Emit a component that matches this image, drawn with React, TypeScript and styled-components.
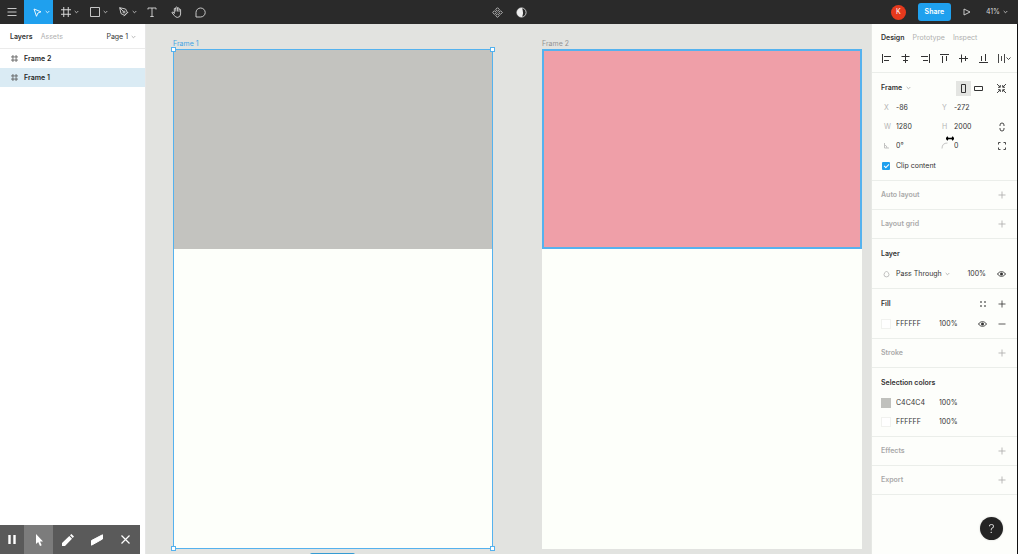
import React from "react";
import styled, { createGlobalStyle } from "styled-components";

const Global = createGlobalStyle`
  *, *::before, *::after { box-sizing: border-box; }
  body { margin: 0; overflow: hidden; }
  body, button, input { font-family: Inter, "Liberation Sans", sans-serif; font-size: 7px; line-height: 10px; }
  button { border: 0; padding: 0; background: none; color: inherit; cursor: pointer; }
  svg { display: block; flex: none; }
`;

const blue = "#1fa0ee";
const outline = "#55b2ee";

const Page = styled.div`
  height: 100vh;
  display: flex;
  flex-direction: column;
  color: #333;
`;

const TopBar = styled.header`
  display: grid;
  grid-template-columns: 1fr auto 1fr;
  height: 24px;
  flex: none;
  background: #2a2a2a;
  color: #d8d8d8;
`;

const Tools = styled.div<{ $end?: boolean }>`
  display: flex;
  align-items: stretch;
  justify-content: ${(p) => (p.$end ? "flex-end" : "flex-start")};
`;

const Tool = styled.button<{ $width: number; $active?: boolean }>`
  display: flex;
  align-items: center;
  justify-content: center;
  width: ${(p) => p.$width}px;
  color: ${(p) => (p.$active ? "#fff" : "inherit")};
  background: ${(p) => (p.$active ? blue : "transparent")};
`;

const MenuTool = styled(Tool)`
  justify-content: flex-end;
  gap: 3px;
  padding-right: 3px;
`;

const Account = styled(Tools)`
  align-items: center;
  padding-right: 10px;
`;

const Avatar = styled.span`
  display: grid;
  place-items: center;
  width: 15px;
  height: 15px;
  margin-right: 12px;
  border-radius: 50%;
  background: #e5391d;
  color: #fff;
`;

const ShareButton = styled.button`
  width: 33px;
  height: 18px;
  margin-right: 12px;
  border-radius: 3px;
  background: ${blue};
  color: #fff;
  font-weight: 600;
`;

const Play = styled.button`
  margin-right: 15px;
`;

const Zoom = styled.button`
  display: flex;
  align-items: center;
  gap: 3px;
`;

const Body = styled.div`
  display: flex;
  flex: 1;
  min-height: 0;
`;

const LeftPanel = styled.aside`
  display: flex;
  flex-direction: column;
  width: 146px;
  flex: none;
  background: #fff;
  border-right: 1px solid #e6e6e6;
`;

const LeftTabs = styled.div`
  display: flex;
  align-items: center;
  height: 25px;
  padding: 2px 9px 0 10px;
  gap: 8px;
  border-bottom: 1px solid #ebebeb;
`;

const Tab = styled.button<{ $active?: boolean }>`
  color: ${(p) => (p.$active ? "#333" : "#b0b0b0")};
  font-weight: ${(p) => (p.$active ? 600 : 400)};
`;

const PageButton = styled.button`
  display: flex;
  align-items: center;
  gap: 3px;
  margin-left: auto;
`;

const LayerRow = styled.button<{ $selected?: boolean }>`
  display: flex;
  align-items: center;
  gap: 6px;
  height: 19px;
  padding: 0 11px;
  font-weight: 600;
  color: #262626;
  background: ${(p) => (p.$selected ? "#daebf4" : "#fff")};
  > svg { color: #555; }
`;

const Recorder = styled.div`
  display: flex;
  height: 29px;
  width: 140px;
  margin-top: auto;
  background: #5a5a5a;
  color: #fff;
`;

const RecorderButton = styled.button<{ $active?: boolean }>`
  display: grid;
  place-items: center;
  flex: 1;
  background: ${(p) => (p.$active ? "#7c7c7c" : "transparent")};
  &:first-child { flex: none; width: 24px; }
`;

const Canvas = styled.main`
  position: relative;
  flex: 1;
  overflow: hidden;
  background: #e2e3e0;
`;

const Artboard = styled.section<{ $x: number; $selected?: boolean }>`
  position: absolute;
  left: ${(p) => p.$x}px;
  top: 25px;
  width: 320px;
  height: 500px;
  background: #fdfffa;
  box-shadow: ${(p) => (p.$selected ? `inset 0 0 0 1px ${outline}` : "none")};
`;

const ArtboardName = styled.span<{ $selected?: boolean }>`
  position: absolute;
  left: 0;
  top: -10px;
  color: ${(p) => (p.$selected ? "#3ea3e3" : "#929292")};
`;

const Shape = styled.div<{ $color: string; $edge: number }>`
  height: 200px;
  background: ${(p) => p.$color};
  border: ${(p) => p.$edge}px solid ${outline};
  border-bottom-width: ${(p) => (p.$edge === 1 ? 0 : p.$edge)}px;
`;

const Handle = styled.i<{ $right?: boolean; $bottom?: boolean }>`
  position: absolute;
  width: 5px;
  height: 5px;
  background: #fff;
  border: 1px solid ${outline};
  ${(p) => (p.$right ? "right" : "left")}: -2px;
  ${(p) => (p.$bottom ? "bottom" : "top")}: -2px;
`;

const SizeBadge = styled.div`
  position: absolute;
  left: 164px;
  bottom: -11px;
  width: 45px;
  height: 12px;
  border-radius: 2px;
  background: #359bd3;
`;

const RightPanel = styled.aside`
  width: 147px;
  flex: none;
  background: #fdfefb;
  border-left: 1px solid #e6e8e4;
  border-right: 1px solid #111;
`;

const RightTabs = styled.div`
  display: flex;
  align-items: center;
  gap: 8px;
  height: 25px;
  padding: 2px 9px 0;
`;

const AlignRow = styled.div`
  display: flex;
  align-items: center;
  justify-content: space-between;
  height: 24px;
  padding: 0 6px 5px 10px;
  border-bottom: 1px solid #ebeeea;
`;

const Section = styled.section<{ $collapsed?: boolean }>`
  padding: ${(p) => (p.$collapsed ? "4px" : "5px")} 11px ${(p) => (p.$collapsed ? "4px" : "5px")} 9px;
  border-bottom: 1px solid #ebeeea;
`;

const SectionHead = styled.div`
  display: flex;
  align-items: center;
  justify-content: space-between;
  height: 20px;
  ${Section} > &:only-child { color: #a9a9a9; }
`;

const Title = styled.h2`
  display: flex;
  align-items: center;
  gap: 4px;
  margin: 0;
  font-size: 7px;
  line-height: 10px;
  font-weight: 600;
`;

const Actions = styled.div`
  display: flex;
  align-items: center;
  gap: 11px;
`;

const Orientation = styled.div`
  display: flex;
`;

const OrientationButton = styled.button<{ $active?: boolean }>`
  display: grid;
  place-items: center;
  width: 15px;
  height: 15px;
  background: ${(p) => (p.$active ? "#e4e5e2" : "transparent")};
`;

const FieldRow = styled.div`
  display: grid;
  grid-template-columns: 58px 58px 1fr;
  align-items: center;
  height: 19px;
`;

const Field = styled.label`
  display: grid;
  grid-template-columns: 15px 1fr;
  align-items: center;
  color: #b5b5b5;
  > span { padding-left: 3px; }
  > svg { margin-left: 2px; }
`;

const TextInput = styled.input`
  width: 100%;
  min-width: 0;
  height: 10px;
  border: 0;
  padding: 0;
  background: none;
  color: #333;
  outline: none;
`;

const ClipLabel = styled.label`
  display: flex;
  align-items: center;
  gap: 6px;
  height: 20px;
  padding: 2px 0 0 1px;
`;

const Check = styled.input`
  appearance: none;
  width: 8px;
  height: 8px;
  margin: 0;
  border-radius: 1px;
  background: ${blue};
  display: grid;
  place-items: center;
  &:checked::after {
    content: "";
    width: 5px;
    height: 3px;
    margin-bottom: 1px;
    border-left: 1px solid #fff;
    border-bottom: 1px solid #fff;
    transform: rotate(-45deg);
  }
`;

const PropertyRow = styled.div`
  display: flex;
  align-items: center;
  justify-content: space-between;
  height: 19px;
`;

const BlendButton = styled.button`
  display: flex;
  align-items: center;
  gap: 3px;
  > svg:first-child { margin: 0 3px 0 2px; }
`;

const ColorRow = styled.div`
  display: grid;
  grid-template-columns: 15px 43px 34px 1fr;
  align-items: center;
  height: 19px;
`;

const Swatch = styled.span<{ $color: string }>`
  width: 10px;
  height: 10px;
  background: ${(p) => p.$color};
  border: 1px solid ${(p) => (p.$color === "#fff" ? "#f1f2ef" : p.$color)};
`;

const RowActions = styled(Actions)`
  justify-content: flex-end;
`;

const HelpButton = styled.button`
  position: fixed;
  right: 15px;
  bottom: 14px;
  width: 23px;
  height: 23px;
  border-radius: 50%;
  background: #242424;
  color: #e6e6e6;
  font-size: 12px;
  font-weight: 300;
  box-shadow: 0 0 2px #0003;
`;

const ResizeCursor = styled.div`
  position: fixed;
  right: 64px;
  top: 136px;
  color: #000;
`;

type IconProps = {
  d: string;
  w?: number;
  h?: number;
  sw?: number;
  fill?: string;
  color?: string;
};

const Icon = ({ d, w = 10, h = w, sw = 1, fill = "none", color = "currentColor" }: IconProps) => (
  <svg width={w} height={h} viewBox={`0 0 ${w} ${h}`} fill={fill} stroke={color} strokeWidth={sw} aria-hidden>
    <path d={d} />
  </svg>
);

const Chevron = ({ color }: { color?: string }) => <Icon w={5} h={4} sw={0.8} color={color} d="M.7 1 2.5 2.8 4.3 1" />;
const Hash = ({ size = 8, sw = 0.9 }: { size?: number; sw?: number }) => (
  <svg width={size} height={size} viewBox="0 0 8 8" fill="none" stroke="currentColor" strokeWidth={sw} aria-hidden>
    <path d="M2.2 0v8M5.8 0v8M0 2.2h8M0 5.8h8" />
  </svg>
);
const Plus = () => <Icon w={8} sw={0.8} d="M4 .5v7M.5 4h7" />;
const Minus = () => <Icon w={8} sw={0.8} d="M.5 4h7" />;
const Eye = () => (
  <svg width="9" height="8" viewBox="0 0 9 8" fill="none" stroke="currentColor" aria-hidden>
    <path d="M.5 4C2.5.9 6.5.9 8.5 4 6.5 7.1 2.5 7.1.5 4Z" strokeWidth=".9" />
    <circle cx="4.5" cy="4" r="1.5" fill="currentColor" stroke="none" />
  </svg>
);

const aligns: [string, string][] = [
  ["Align left", "M.5 0v9M2 2.5h7M2 6.5h5"],
  ["Align horizontal centers", "M4.5 0v9M.5 2.5h8M2 6.5h5"],
  ["Align right", "M8.5 0v9M0 2.5h7M2 6.5h5"],
  ["Align top", "M0 .5h9M2.5 2v7M6.5 2v5"],
  ["Align vertical centers", "M0 4.5h9M2.5 .5v8M6.5 2v5"],
  ["Align bottom", "M0 8.5h9M2.5 2v5M6.5 0v7"],
];

const Input = ({ label, value, icon }: { label: string; value: string; icon?: React.ReactNode }) => (
  <Field>
    {icon ?? <span>{label}</span>}
    <TextInput aria-label={label} defaultValue={value} />
  </Field>
);

const Collapsed = ({ title }: { title: string }) => (
  <Section $collapsed>
    <SectionHead>
      <Title>{title}</Title>
      <button aria-label={`Add ${title}`}><Plus /></button>
    </SectionHead>
  </Section>
);

const ColorValue = ({ color, hex, children }: { color: string; hex: string; children?: React.ReactNode }) => (
  <ColorRow>
    <Swatch $color={color} />
    <TextInput aria-label="Color" defaultValue={hex} />
    <TextInput aria-label="Opacity" defaultValue="100%" />
    {children}
  </ColorRow>
);

export default function App() {
  return (
    <Page>
      <Global />
      <TopBar>
        <Tools>
          <Tool $width={24} aria-label="Menu"><Icon d="M.5 1.5h9M.5 5h9M.5 8.5h9" sw={0.9} /></Tool>
          <MenuTool $width={29} $active aria-label="Move">
            <Icon w={9} d="M1 1 8 3.8 4.9 5 3.5 8.3Z" sw={0.9} /><Chevron />
          </MenuTool>
          <MenuTool $width={29} aria-label="Frame"><Hash size={10} sw={0.8} /><Chevron /></MenuTool>
          <MenuTool $width={29} aria-label="Rectangle"><Icon d="M.5.5h9v9h-9Z" sw={0.9} /><Chevron /></MenuTool>
          <MenuTool $width={29} aria-label="Pen">
            <svg width="10" height="10" viewBox="0 0 10 10" fill="none" stroke="currentColor" strokeWidth=".9" aria-hidden>
              <path d="M.7.7 6.6 2 8.3 5.4 5.4 8.3 2 6.6ZM.7.7 4.3 4.3M5 9.2 9.2 5" />
              <circle cx="5" cy="5" r="1" />
            </svg>
            <Chevron />
          </MenuTool>
          <Tool $width={24} aria-label="Text"><Icon d="M1 2.5V1h8v1.5M5 1v8.5M3.3 9.5h3.4" sw={0.9} /></Tool>
          <Tool $width={25} aria-label="Hand">
            <Icon w={12} h={12} sw={0.9} d="M3.3 7.5V2.6q.8-1 1.5 0V5.5M4.8 3V1.5q.8-1 1.6 0V5.5M6.4 2.3q.8-1 1.6 0V5.8M8 3.5q.8-1 1.6 0V8Q9.5 11.4 6.5 11.4 4.5 11.4 3.3 9.5L1 6.8Q.9 5.8 2.1 6.1L3.3 7.5" />
          </Tool>
          <Tool $width={23} aria-label="Comment"><Icon w={11} d="M1 10V5.5A4.6 4.5 0 1 1 5.6 10Z" sw={0.9} /></Tool>
        </Tools>
        <Tools>
          <Tool $width={24} aria-label="Create component">
            <Icon w={11} sw={0.8} d="M5.5.7 7.3 2.5 5.5 4.3 3.7 2.5ZM5.5 6.7 7.3 8.5 5.5 10.3 3.7 8.5ZM2.5 3.7 4.3 5.5 2.5 7.3.7 5.5ZM8.5 3.7 10.3 5.5 8.5 7.3 6.7 5.5Z" />
          </Tool>
          <Tool $width={24} aria-label="Use as mask">
            <svg width="11" height="11" viewBox="0 0 11 11" aria-hidden>
              <circle cx="5.5" cy="5.5" r="4.6" fill="none" stroke="currentColor" strokeWidth=".9" />
              <path d="M6 .9H5.500A4.6 4.6 0 0 0 5.500 10.1H6Q8 5.500 6 .9Z" fill="#eee" />
            </svg>
          </Tool>
        </Tools>
        <Account $end>
          <Avatar>K</Avatar>
          <ShareButton>Share</ShareButton>
          <Play aria-label="Present"><Icon w={8} d="M1 1 7 4 1 7Z" sw={0.9} /></Play>
          <Zoom>41% <Chevron /></Zoom>
        </Account>
      </TopBar>
      <Body>
        <LeftPanel>
          <LeftTabs>
            <Tab $active>Layers</Tab>
            <Tab>Assets</Tab>
            <PageButton>Page 1 <Chevron color="#a5a5a5" /></PageButton>
          </LeftTabs>
          <LayerRow><Hash size={7} /> Frame 2</LayerRow>
          <LayerRow $selected><Hash size={7} /> Frame 1</LayerRow>
          <Recorder>
            <RecorderButton aria-label="Pause"><Icon w={8} h={9} sw={2.4} d="M1.5 0v9M6.5 0v9" /></RecorderButton>
            <RecorderButton $active aria-label="Pointer">
              <Icon w={8} h={12} sw={0} fill="#fff" d="M1 0V10L3.2 8 5 12 6.7 11.2 5 7.4H8Z" />
            </RecorderButton>
            <RecorderButton aria-label="Pen"><Icon w={12} sw={0} fill="#fff" d="M0 12V9L7.3 2 10 4.7 3 12ZM8 1.3 9.4 0 12 2.5 10.7 4Z" /></RecorderButton>
            <RecorderButton aria-label="Eraser"><Icon w={12} sw={1} fill="#fff" d="M.5 6.500 11.500.8V5L.5 11.200Z" /></RecorderButton>
            <RecorderButton aria-label="Close"><Icon w={9} sw={1.2} d="M.5.5 8.5 8.5M8.5.5.5 8.5" /></RecorderButton>
          </Recorder>
        </LeftPanel>
        <Canvas>
          <Artboard $x={27} $selected>
            <ArtboardName $selected>Frame 1</ArtboardName>
            <Shape $color="#c3c3bf" $edge={1} />
            <Handle /><Handle $right /><Handle $bottom /><Handle $right $bottom />
          </Artboard>
          <Artboard $x={396}>
            <ArtboardName>Frame 2</ArtboardName>
            <Shape $color="#ef9fa8" $edge={2} />
          </Artboard>
          <SizeBadge />
        </Canvas>
        <RightPanel>
          <RightTabs>
            <Tab $active>Design</Tab>
            <Tab>Prototype</Tab>
            <Tab>Inspect</Tab>
          </RightTabs>
          <AlignRow>
            {aligns.map(([name, d]) => (
              <button key={name} aria-label={name}><Icon w={9} d={d} /></button>
            ))}
            <button aria-label="Distribute"><Icon w={13} h={9} d="M.5 0v9M3.500 2v5M6.500 0v9M8.500 3.500 10.500 5.500 12.500 3.500" sw={0.9} /></button>
          </AlignRow>
          <Section>
            <SectionHead>
              <Title>Frame <Chevron color="#a5a5a5" /></Title>
              <Actions>
                <Orientation>
                  <OrientationButton $active aria-label="Portrait"><Icon w={5} h={9} d="M.5.5h4v8h-4Z" /></OrientationButton>
                  <OrientationButton aria-label="Landscape"><Icon w={9} h={5} d="M.5.5h8v4h-8Z" /></OrientationButton>
                </Orientation>
                <button aria-label="Resize to fit">
                  <Icon w={9} sw={0.9} d="M0 0 3 3M3.3 1v2.3H1M9 0 6 3M5.7 1v2.3H8M0 9 3 6M3.3 8V5.7H1M9 9 6 6M5.7 8V5.7H8" />
                </button>
              </Actions>
            </SectionHead>
            <FieldRow><Input label="X" value="-86" /><Input label="Y" value="-272" /></FieldRow>
            <FieldRow>
              <Input label="W" value="1280" /><Input label="H" value="2000" />
              <RowActions><button aria-label="Constrain proportions"><Icon w={8} h={10} d="M2 4V3q0-2 2-2t2 2v1M2 6v1q0 2 2 2t2-2V6" sw={0.9} /></button></RowActions>
            </FieldRow>
            <FieldRow>
              <Input label="Rotation" value="0°" icon={<Icon w={7} d="M1.5 1v5H6M1.5 3Q4 3.5 4 6" sw={0.8} />} />
              <Input label="Corner radius" value="0" icon={<Icon w={7} d="M1 6.5Q1 1 6.5 1" sw={0.8} />} />
              <RowActions><button aria-label="Independent corners"><Icon w={8} d="M.5 2.5v-2h2M5.5.5h2v2M7.5 5.5v2h-2M2.5 7.5h-2v-2" sw={0.9} /></button></RowActions>
            </FieldRow>
            <ClipLabel><Check type="checkbox" defaultChecked /> Clip content</ClipLabel>
          </Section>
          <Collapsed title="Auto layout" />
          <Collapsed title="Layout grid" />
          <Section>
            <SectionHead><Title>Layer</Title></SectionHead>
            <PropertyRow>
              <BlendButton>
                <Icon w={7} h={8} color="#b0b0b0" sw={0.8} d="M3.5 1Q1 3 1 4.600a2.500 2.300 0 0 0 5 0Q6 3 3.500 1" />
                Pass Through <Chevron color="#a5a5a5" />
              </BlendButton>
              <Actions><span>100%</span><button aria-label="Toggle layer"><Eye /></button></Actions>
            </PropertyRow>
          </Section>
          <Section>
            <SectionHead>
              <Title>Fill</Title>
              <Actions>
                <button aria-label="Styles"><Icon w={8} sw={1.4} d="M1.3 2h1.4M5.3 2h1.4M1.3 6h1.4M5.3 6h1.4" /></button>
                <button aria-label="Add fill"><Plus /></button>
              </Actions>
            </SectionHead>
            <ColorValue color="#fff" hex="FFFFFF">
              <RowActions><button aria-label="Toggle fill"><Eye /></button><button aria-label="Remove fill"><Minus /></button></RowActions>
            </ColorValue>
          </Section>
          <Collapsed title="Stroke" />
          <Section>
            <SectionHead><Title>Selection colors</Title></SectionHead>
            <ColorValue color="#c0c1bd" hex="C4C4C4" />
            <ColorValue color="#fff" hex="FFFFFF" />
          </Section>
          <Collapsed title="Effects" />
          <Collapsed title="Export" />
        </RightPanel>
      </Body>
      <ResizeCursor>
        <Icon w={8} h={5} sw={1.4} d="M0 2.5h8M1.8.8.5 2.5 1.8 4.2M6.2.8 7.5 2.5 6.2 4.2" />
      </ResizeCursor>
      <HelpButton aria-label="Help">?</HelpButton>
    </Page>
  );
}
